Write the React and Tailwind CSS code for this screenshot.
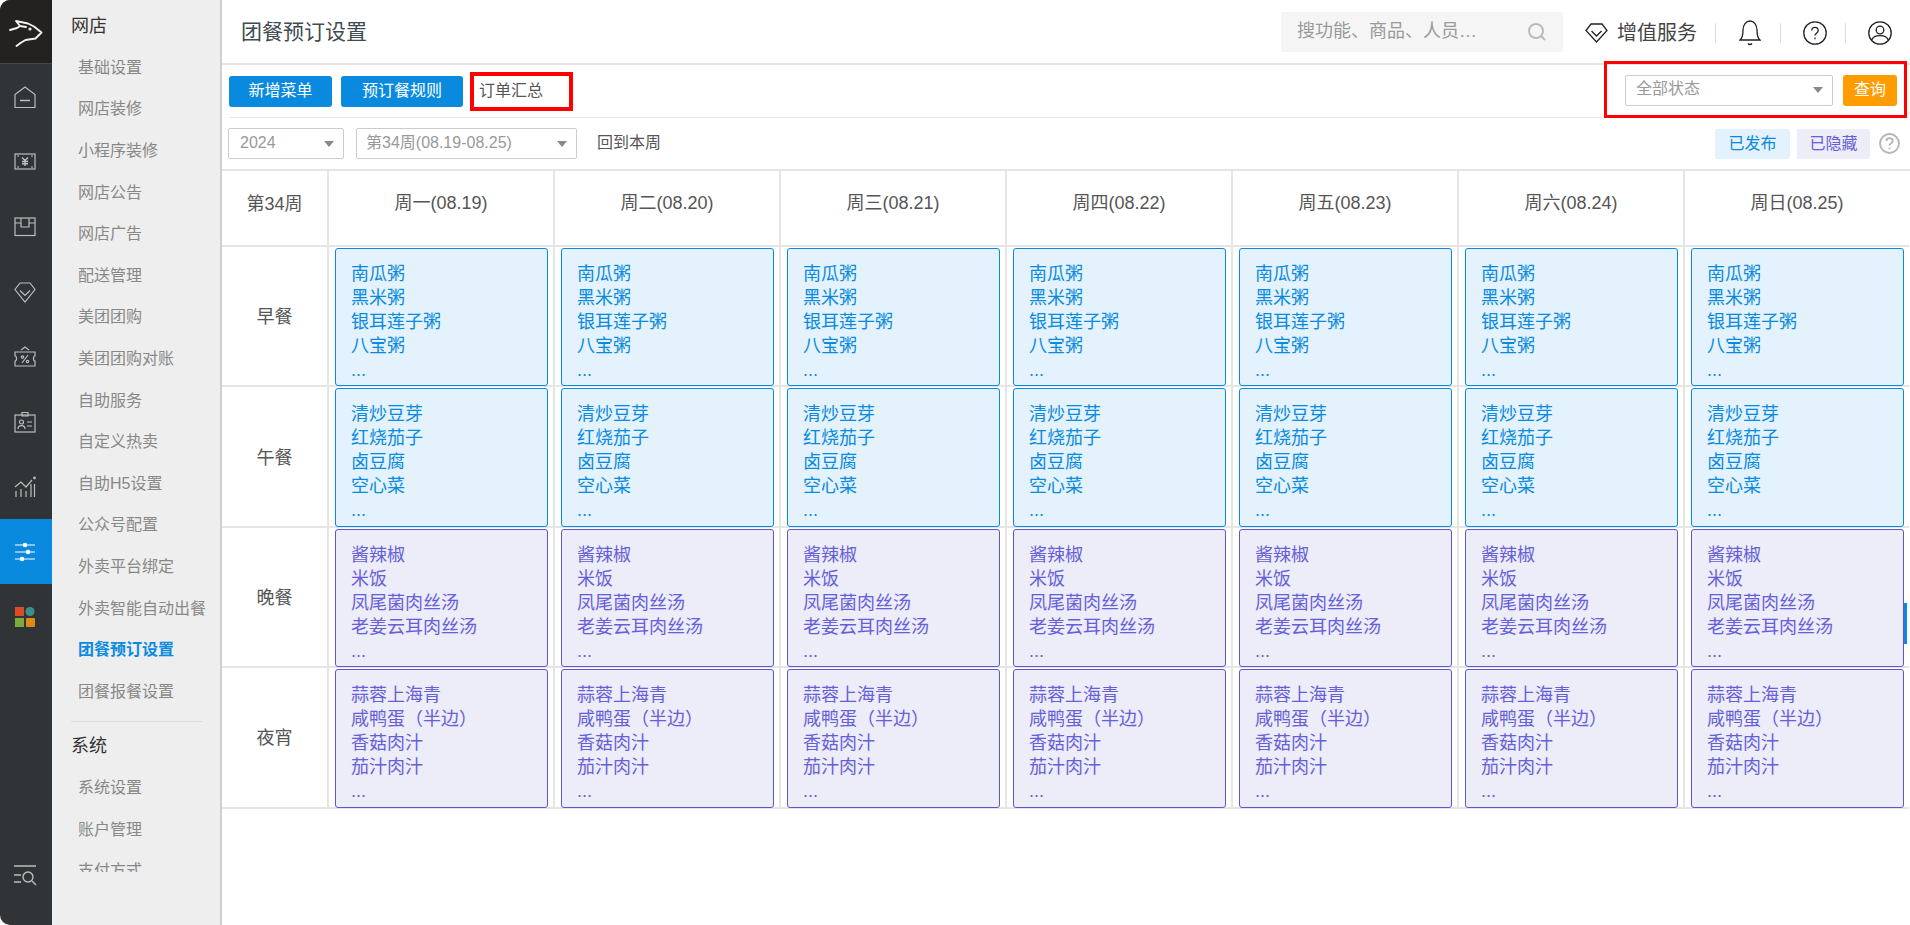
import React from 'react';

const font = { fontFamily: '"Liberation Sans", "Noto Sans CJK SC", sans-serif' };

const shopMenu = ['基础设置', '网店装修', '小程序装修', '网店公告', '网店广告', '配送管理', '美团团购', '美团团购对账', '自助服务', '自定义热卖', '自助H5设置', '公众号配置', '外卖平台绑定', '外卖智能自动出餐', '团餐预订设置', '团餐报餐设置'];
const systemMenu = ['系统设置', '账户管理', '支付方式'];
const days = ['周一(08.19)', '周二(08.20)', '周三(08.21)', '周四(08.22)', '周五(08.23)', '周六(08.24)', '周日(08.25)'];

const meals = [
  { name: '早餐', tone: 'blue', items: ['南瓜粥', '黑米粥', '银耳莲子粥', '八宝粥'] },
  { name: '午餐', tone: 'blue', items: ['清炒豆芽', '红烧茄子', '卤豆腐', '空心菜'] },
  { name: '晚餐', tone: 'purple', items: ['酱辣椒', '米饭', '凤尾菌肉丝汤', '老姜云耳肉丝汤'] },
  { name: '夜宵', tone: 'purple', items: ['蒜蓉上海青', '咸鸭蛋（半边）', '香菇肉汁', '茄汁肉汁'] },
];

const RailIcon = ({ children, active }) => (
  <div className={`h-[65px] flex items-center justify-center pr-[2px] ${active ? 'bg-[#0a8adf]' : ''}`}>
    <svg width="24" height="24" viewBox="0 0 24 24" fill="none" stroke={active ? '#fff' : '#bdbdbd'} strokeWidth="1.2">{children}</svg>
  </div>
);

const Caret = () => <span className="w-0 h-0 border-x-[5px] border-x-transparent border-t-[6px] border-t-[#888]" />;

const Select = ({ label, className }) => (
  <div className={`h-[31px] bg-white border border-[#ccc] rounded-[2px] flex items-center justify-between pr-[9px] text-[16px] text-[#999] ${className}`}>
    <span className="-mt-[2px]">{label}</span>
    <Caret />
  </div>
);

const MealCard = ({ tone, items }) => (
  <div className={`h-[138.4px] ml-[6px] mr-[5px] my-[1px] border rounded-[3px] pl-[15px] pt-[13px] text-[18px] leading-[24px] overflow-hidden ${tone === 'blue' ? 'bg-[#e3f2fc] border-[#0a8adf] text-[#0a8adf]' : 'bg-[#edecf9] border-[#5f56cc] text-[#6560d8]'}`}>
    {items.map((item) => <div key={item}>{item}</div>)}
    <div>...</div>
  </div>
);

export default function App() {
  return (
    <div className="w-[1910px] h-[925px] flex overflow-hidden bg-white relative" style={font}>
      {/* icon rail */}
      <div className="w-[52px] h-full bg-[#303436] rounded-tl-[10px] rounded-bl-[10px] overflow-hidden flex flex-col">
        <div className="h-[64px] bg-[#242220] border-b border-[#44484a]">
          <svg width="52" height="64" viewBox="0 0 52 64" fill="none" stroke="#f2f2f2" strokeWidth="1.9" strokeLinejoin="round" strokeLinecap="round">
            <path d="M10 30l7-2 3-2-4-5 12 2.500 6 3 7.500 6-6 6-10 1.500-5 3-4 3" />
            <path d="M20 26l6 1" />
            <circle cx="30" cy="29" r="0.6" />
          </svg>
        </div>
        <RailIcon><path d="M2 22.500V9.500L12 2l10 7.500v13z" /><path d="M7 15.500h10" strokeWidth="1.600" /></RailIcon>
        <RailIcon>
          <rect x="2" y="4" width="20" height="15" />
          <path d="M4 6h2M18 6h2M4 17h2M18 17h2" />
          <path d="M9 7.500l3 3 3-3M12 10.500V16M9 11.500h6M9 13.800h6" strokeWidth="1.400" />
        </RailIcon>
        <RailIcon><rect x="2" y="3" width="20" height="17.500" /><path d="M2 8h6M16 8h6M8 3v9h8V3" /></RailIcon>
        <RailIcon><path d="M7 3h10l5 6.500L12 22 2 9.500z" /><path d="M7 10.500l5 5 5-5" /></RailIcon>
        <RailIcon><path d="M2 7h20v4c-2 0-2 5 0 5v5H2v-5c2 0 2-5 0-5z" /><path d="M8 5l4-3 4 3M9 18l6-8" /><circle cx="9.500" cy="12" r="1.200" /><circle cx="14.500" cy="16.500" r="1.200" /></RailIcon>
        <RailIcon><rect x="2" y="5" width="20" height="17" /><path d="M9 2.500h6V6H9zM14 12h5M14 16h5" /><circle cx="8.500" cy="12" r="2" /><path d="M5 19c0-4.500 7-4.500 7 0" /></RailIcon>
        <RailIcon><path d="M3 22v-6M8 22v-8M13 22v-6M18 22V9M21.500 22V9" /><path d="M2 12l6-5 5 5 6-7" /><circle cx="21.500" cy="3" r="0.800" /></RailIcon>
        <RailIcon active><path d="M2 5h20M2 12h20M2 19h20" /><circle cx="12" cy="5" r="1.700" fill="#fff" /><circle cx="15" cy="12" r="1.700" fill="#fff" /><circle cx="9" cy="19" r="1.700" fill="#fff" /></RailIcon>
        <div className="h-[65px] flex items-center justify-center pr-[2px]">
          <svg width="20" height="20" viewBox="0 0 20 20">
            <rect x="0" y="0" width="9" height="9" fill="#dd4b26" />
            <circle cx="15" cy="4.500" r="4.500" fill="#3d8f8c" />
            <rect x="0" y="11" width="9" height="9" fill="#7dac3a" />
            <rect x="11" y="11" width="9" height="9" rx="1" fill="#e08a12" />
          </svg>
        </div>
        <div className="mt-auto h-[72px] flex items-start justify-center pt-[12px] pr-[2px]">
          <svg width="24" height="22" viewBox="0 0 24 22" fill="none" stroke="#bdbdbd" strokeWidth="1.400">
            <path d="M1 1h22M1 10h7M1 17h7" />
            <circle cx="15" cy="12" r="5" />
            <path d="M19 16l4 4" />
          </svg>
        </div>
      </div>

      {/* second level menu */}
      <div className="w-[170px] h-full bg-[#eeeeee] border-r-2 border-[#cfcfcf] shrink-0">
        <div className="h-[872px] overflow-hidden pl-[19px] pr-[18px]">
          <div className="h-[47px] pt-[5px] flex items-center text-[18px] text-[#333]">网店</div>
          {shopMenu.map((item) => (
            <div key={item} className={`h-[41.6px] flex items-center pl-[7px] text-[16px] whitespace-nowrap ${item === '团餐预订设置' ? 'text-[#0a8adf] font-bold' : 'text-[#888]'}`}>{item}</div>
          ))}
          <div className="h-px bg-[#dcdcdc] mt-[8px]" />
          <div className="h-[46px] pt-[4px] flex items-center text-[18px] text-[#333]">系统</div>
          {systemMenu.map((item) => (
            <div key={item} className="h-[41.6px] flex items-center pl-[7px] text-[16px] text-[#888]">{item}</div>
          ))}
        </div>
      </div>

      {/* main */}
      <div className="flex-1 min-w-0 flex flex-col">
        <div className="h-[65px] shrink-0 border-b-2 border-[#e5e5e5] flex items-center pl-[19px] pr-[18px]">
          <h1 className="text-[21px] font-normal text-[#3f4a52]">团餐预订设置</h1>
          <div className="ml-auto w-[282px] h-[40px] rounded-[3px] bg-[#f5f5f5] flex items-center justify-between pl-[16px] pr-[16px] text-[18px] text-[#999]">
            <span>搜功能、商品、人员…</span>
            <svg width="20" height="20" viewBox="0 0 20 20" fill="none" stroke="#bbb" strokeWidth="2"><circle cx="9" cy="9" r="7" /><path d="M14 14l4 4" /></svg>
          </div>
          <div className="ml-[22px] pt-[3px] flex items-center text-[#333]">
            <svg width="23" height="20" viewBox="0 0 23 20" fill="none" stroke="#222" strokeWidth="1.300"><path d="M6 1h11l5 6.500L11.500 19 1 7.500z" /><path d="M6.500 8l5 5 5-5" /></svg>
            <span className="ml-[9px] text-[20px] leading-none text-[#444]">增值服务</span>
            <span className="ml-[18px] w-px h-[20px] bg-[#ddd]" />
            <svg className="ml-[23px]" width="22" height="26" viewBox="0 0 22 26" fill="none" stroke="#222" strokeWidth="1.300"><path d="M1 20c2.500-2 3-5 3-10 0-5 3-9 7-9s7 4 7 9c0 5 .500 8 3 10z" /><path d="M9 23.500c1 1.300 3 1.300 4 0" /></svg>
            <span className="ml-[19px] w-px h-[20px] bg-[#ddd]" />
            <svg className="ml-[22px]" width="24" height="24" viewBox="0 0 24 24" fill="none" stroke="#222" strokeWidth="1.300"><circle cx="12" cy="12" r="11.200" /><path d="M8.800 9.500c0-4.300 6.400-4.300 6.400 0 0 2.800-3.200 2.500-3.200 5M12 16.500v1.800" /></svg>
            <span className="ml-[18px] w-px h-[20px] bg-[#ddd]" />
            <svg className="ml-[22px]" width="24" height="24" viewBox="0 0 24 24" fill="none" stroke="#222" strokeWidth="1.300"><circle cx="12" cy="12" r="11.200" /><circle cx="12" cy="9" r="3.800" /><path d="M3.500 19.500c2-6.500 15-6.500 17 0" /></svg>
          </div>
        </div>

        <div className="h-[53px] shrink-0 ml-[7px] mr-[8px] border-b border-[#e5e5e5] flex items-center justify-between">
          <div className="flex items-center">
            <button className="w-[103px] h-[31px] rounded-[3px] bg-[#0a8adf] text-white text-[16px]">新增菜单</button>
            <button className="ml-[9px] w-[122px] h-[31px] rounded-[3px] bg-[#0a8adf] text-white text-[16px]">预订餐规则</button>
            <button className="ml-[7px] w-[103px] h-[39px] border-[4px] border-[#ff0000] text-[16px] text-[#555] text-left pl-[5px]">订单汇总</button>
          </div>
          <div className="-mt-[3px] -mr-[5px] w-[303px] h-[57px] border-[3px] border-[#ff0000] flex items-center pt-[1px] pl-[18px]">
            <Select label="全部状态" className="w-[208px] pl-[10px]" />
            <button className="ml-[10px] w-[54px] h-[31px] rounded-[3px] bg-[#ff9c00] text-white text-[16px]">查询</button>
          </div>
        </div>

        <div className="h-[51px] shrink-0 pl-[6px] pr-[10px] flex items-center">
          <Select label="2024" className="w-[116px] pl-[11px]" />
          <Select label="第34周(08.19-08.25)" className="ml-[12px] w-[221px] pl-[9px]" />
          <span className="ml-[20px] -mt-[2px] text-[16px] text-[#555]">回到本周</span>
          <span className="ml-auto w-[75px] h-[30px] rounded-[2px] bg-[#e3f2fc] text-[#0a8adf] text-[16px] flex items-center justify-center">已发布</span>
          <span className="ml-[7px] w-[73px] h-[30px] rounded-[2px] bg-[#edecf9] text-[#6560d8] text-[16px] flex items-center justify-center">已隐藏</span>
          <svg className="ml-[9px]" width="21" height="21" viewBox="0 0 20 20" fill="none" stroke="#b5b5b5" strokeWidth="1.800"><circle cx="10" cy="10" r="9" /><path d="M7 7.500c0-3.500 6-3.500 6 0 0 2.500-3 2-3 4.500M10 14v1.500" /></svg>
        </div>

        <div className="grid grid-cols-[105px_repeat(7,226px)] border-t-2 border-[#e5e5e5] text-[#555]">
          <div className="h-[76px] border-b-2 border-[#e5e5e5] flex items-center justify-center text-[18px] pb-[7px]">第34周</div>
          {days.map((day) => (
            <div key={day} className="h-[76px] border-l-2 border-b-2 border-[#e5e5e5] flex items-center justify-center text-[18px] pb-[9px]">{day}</div>
          ))}
          {meals.map((meal) => (
            <React.Fragment key={meal.name}>
              <div className="h-[140.4px] border-b-2 border-[#e5e5e5] flex items-center justify-center text-[18px] pt-[3px]">{meal.name}</div>
              {days.map((day) => (
                <div key={day} className="h-[140.4px] border-l-2 border-b-2 border-[#e5e5e5]">
                  <MealCard tone={meal.tone} items={meal.items} />
                </div>
              ))}
            </React.Fragment>
          ))}
        </div>
      </div>

      {/* side tab on the right edge */}
      <div className="absolute right-[3px] top-[603px] w-[3px] h-[41px] bg-[#0a8adf]" />
    </div>
  );
}
